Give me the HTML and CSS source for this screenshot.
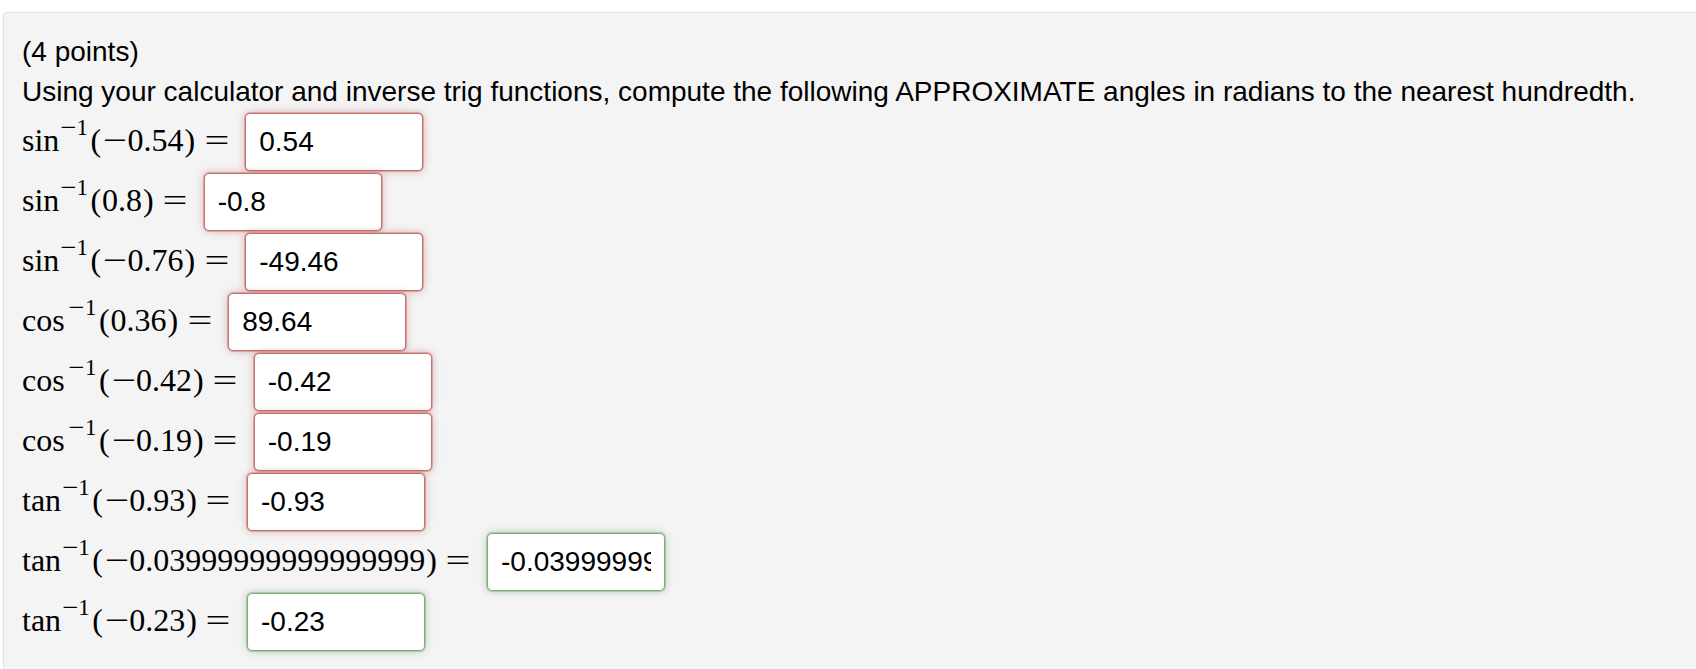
FILE: index.html
```html
<!DOCTYPE html>
<html lang="en">
<head>
<meta charset="utf-8">
<title>Inverse trig functions</title>
<link rel="stylesheet" href="styles.css">
</head>
<body>
<div class="page">
  <div class="problem">
    <p class="points">(4 points)</p>
    <p class="prompt">Using your calculator and inverse trig functions, compute the following APPROXIMATE angles in radians to the nearest hundredth.</p>
    <div class="rows">
      <div class="row">
        <span class="math"><span class="mi">sin</span><span class="sup"><span class="mo minus">−</span>1</span><span class="mo paren">(</span><span class="mo minus">−</span><span class="mn">0.54</span><span class="mo paren">)</span><span class="mo eq">=</span></span>
        <input class="answer incorrect" type="text" value="0.54">
      </div>
      <div class="row">
        <span class="math"><span class="mi">sin</span><span class="sup"><span class="mo minus">−</span>1</span><span class="mo paren">(</span><span class="mn">0.8</span><span class="mo paren">)</span><span class="mo eq">=</span></span>
        <input class="answer incorrect" type="text" value="-0.8">
      </div>
      <div class="row">
        <span class="math"><span class="mi">sin</span><span class="sup"><span class="mo minus">−</span>1</span><span class="mo paren">(</span><span class="mo minus">−</span><span class="mn">0.76</span><span class="mo paren">)</span><span class="mo eq">=</span></span>
        <input class="answer incorrect" type="text" value="-49.46">
      </div>
      <div class="row">
        <span class="math"><span class="mi cos">cos</span><span class="sup"><span class="mo minus">−</span>1</span><span class="mo paren">(</span><span class="mn">0.36</span><span class="mo paren">)</span><span class="mo eq">=</span></span>
        <input class="answer incorrect" type="text" value="89.64">
      </div>
      <div class="row">
        <span class="math"><span class="mi cos">cos</span><span class="sup"><span class="mo minus">−</span>1</span><span class="mo paren">(</span><span class="mo minus">−</span><span class="mn">0.42</span><span class="mo paren">)</span><span class="mo eq">=</span></span>
        <input class="answer incorrect" type="text" value="-0.42">
      </div>
      <div class="row">
        <span class="math"><span class="mi cos">cos</span><span class="sup"><span class="mo minus">−</span>1</span><span class="mo paren">(</span><span class="mo minus">−</span><span class="mn">0.19</span><span class="mo paren">)</span><span class="mo eq">=</span></span>
        <input class="answer incorrect" type="text" value="-0.19">
      </div>
      <div class="row">
        <span class="math"><span class="mi">tan</span><span class="sup"><span class="mo minus">−</span>1</span><span class="mo paren">(</span><span class="mo minus">−</span><span class="mn">0.93</span><span class="mo paren">)</span><span class="mo eq">=</span></span>
        <input class="answer incorrect" type="text" value="-0.93">
      </div>
      <div class="row">
        <span class="math"><span class="mi">tan</span><span class="sup"><span class="mo minus">−</span>1</span><span class="mo paren">(</span><span class="mo minus">−</span><span class="mn">0.03999999999999999</span><span class="mo paren">)</span><span class="mo eq">=</span></span>
        <input class="answer correct" type="text" value="-0.03999999999999999">
      </div>
      <div class="row">
        <span class="math"><span class="mi">tan</span><span class="sup"><span class="mo minus">−</span>1</span><span class="mo paren">(</span><span class="mo minus">−</span><span class="mn">0.23</span><span class="mo paren">)</span><span class="mo eq">=</span></span>
        <input class="answer correct" type="text" value="-0.23">
      </div>
    </div>
  </div>
</div>
</body>
</html>
```

FILE: styles.css
```css
html, body {
  margin: 0;
  padding: 0;
  background: #ffffff;
  overflow: hidden;
}

body {
  font-family: "Liberation Sans", Arial, sans-serif;
  color: #000;
}

.page {
  padding: 12px 0 0 3px;
}

.problem {
  margin-right: -20px;
  min-height: 700px;
  background: #f4f4f4;
  border: 1px solid #e1e1e1;
  border-radius: 4px;
  padding: 19px 18px 20px 18px;
  box-shadow: 0 -1px 2px rgba(0, 0, 0, 0.04);
}

.points,
.prompt {
  margin: 0;
  font-size: 28px;
  line-height: 40px;
}

.rows {
  display: flex;
  flex-direction: column;
}

.row {
  display: flex;
  align-items: center;
  height: 60px;
  gap: 9px;
}

.math {
  font-family: "Liberation Serif", "Times New Roman", serif;
  font-size: 32px;
  line-height: 32px;
  margin-bottom: 4px;
  white-space: nowrap;
}

.mi {
  padding-right: 0.02em;
}

.mi.cos {
  padding-right: 0.12em;
}

.sup {
  font-size: 0.72em;
  line-height: 0;
  vertical-align: 16px;
  padding-right: 0.06em;
}

.sup .mo.minus {
  width: 0.72em;
  transform: scaleX(1.25);
}

.mo.minus {
  display: inline-block;
  width: 0.8em;
  text-align: center;
  transform: scaleX(1.35);
}

.mo.paren {
  padding: 0 0.03em;
}

.mo.eq {
  display: inline-block;
  margin: 0 0.33em 0 0.36em;
  transform: scaleX(1.38);
}

.answer {
  box-sizing: border-box;
  width: 178px;
  height: 58px;
  margin: 0;
  padding: 0 13px;
  font-family: "Liberation Sans", Arial, sans-serif;
  font-size: 28px;
  color: #000;
  background: #fff;
  border: 1px solid;
  border-radius: 5px;
  outline: none;
}

.answer.incorrect {
  border-color: #c4706c;
  box-shadow: 0 0 0 1px rgba(196, 112, 108, 0.45), 0 0 8px rgba(191, 84, 84, 0.45);
}

.answer.correct {
  border-color: #7dac75;
  box-shadow: 0 0 0 1px rgba(125, 172, 117, 0.45), 0 0 8px rgba(81, 153, 81, 0.45);
}
```
